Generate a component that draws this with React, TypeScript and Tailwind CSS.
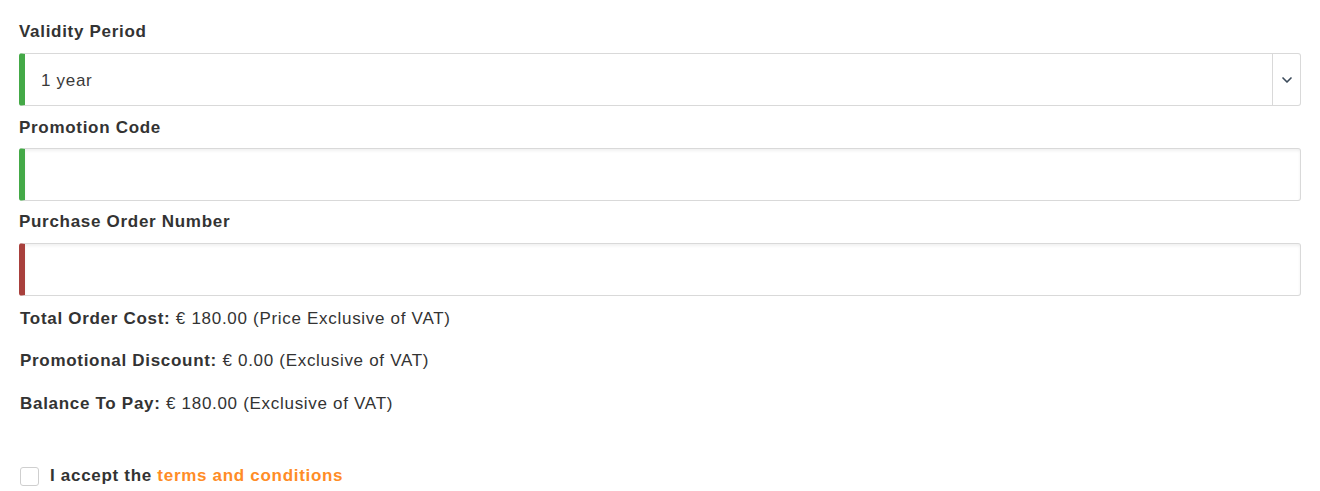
import { ChevronDown } from "lucide-react"

const inputCls =
  "w-full h-[53px] border border-[#d9d9d9] rounded-[3px] bg-white shadow-[inset_0_2px_3px_rgba(0,0,0,0.06)] outline-none px-4 text-[17px]"

export default function App() {
  return (
    <div
      className="w-[1320px] h-[491px] bg-white pl-[19px] pr-[19px] pt-[21px] text-[#333] tracking-[0.7px] overflow-hidden"
      style={{ fontFamily: '"Liberation Sans", Arial, sans-serif' }}
    >
      {/* Validity Period */}
      <label className="block text-[17px] leading-[22px] font-bold mb-[10px]">Validity Period</label>
      <div className="flex h-[53px] border border-[#d9d9d9] border-l-[6px] border-l-[#44a947] rounded-[3px] bg-white">
        <div className="flex-1 flex items-center pl-[16px] pt-[3px] text-[17px] text-[#3a3a3a]">1 year</div>
        <div className="w-[28px] border-l border-[#d9d9d9] flex items-center justify-center">
          <ChevronDown className="w-[16px] h-[16px] text-[#3b4a5a]" strokeWidth={2.5} />
        </div>
      </div>

      {/* Promotion Code */}
      <label className="block text-[17px] leading-[22px] font-bold mt-[11px] mb-[9px]">Promotion Code</label>
      <input className={`${inputCls} border-l-[6px] border-l-[#44a947]`} />

      {/* Purchase Order Number */}
      <label className="block text-[17px] leading-[22px] font-bold mt-[10px] mb-[10px]">Purchase Order Number</label>
      <input className={`${inputCls} border-l-[6px] border-l-[#a8403c]`} />

      {/* Totals */}
      <div className="mt-[12px] text-[17px] leading-[22px] pl-px">
        <p>
          <span className="font-bold">Total Order Cost:</span> € 180.00 (Price Exclusive of VAT)
        </p>
        <p className="mt-[20px]">
          <span className="font-bold">Promotional Discount:</span> € 0.00 (Exclusive of VAT)
        </p>
        <p className="mt-[21px]">
          <span className="font-bold">Balance To Pay:</span> € 180.00 (Exclusive of VAT)
        </p>
      </div>

      {/* Terms */}
      <label className="flex items-center mt-[50px] pl-px">
        <span className="w-[19px] h-[19px] border border-[#cfcfcf] rounded-[3px] bg-white mr-[11px]" />
        <span className="text-[17px] leading-[22px] font-bold">
          I accept the <span className="text-[#ff8c26]">terms and conditions</span>
        </span>
      </label>
    </div>
  )
}
